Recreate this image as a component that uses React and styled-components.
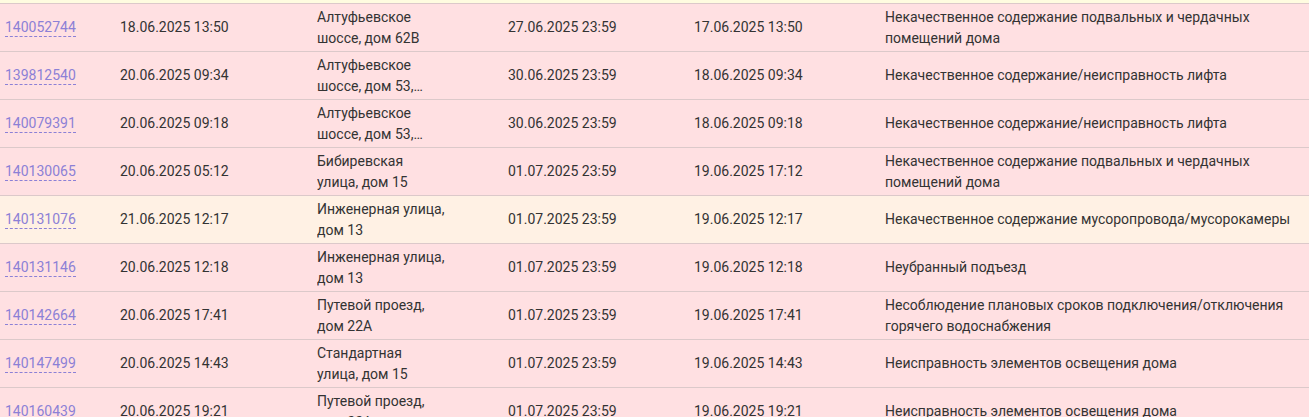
import React from 'react';
import styled, { createGlobalStyle } from 'styled-components';

const rows = [
    { id: '140052744', created: '18.06.2025 13:50', address: 'Алтуфьевское шоссе, дом 62В', deadline: '27.06.2025 23:59', updated: '17.06.2025 13:50', text: 'Некачественное содержание подвальных и чердачных помещений дома' },
    { id: '139812540', created: '20.06.2025 09:34', address: 'Алтуфьевское шоссе, дом 53, строение 1', deadline: '30.06.2025 23:59', updated: '18.06.2025 09:34', text: 'Некачественное содержание/неисправность лифта' },
    { id: '140079391', created: '20.06.2025 09:18', address: 'Алтуфьевское шоссе, дом 53, строение 1', deadline: '30.06.2025 23:59', updated: '18.06.2025 09:18', text: 'Некачественное содержание/неисправность лифта' },
    { id: '140130065', created: '20.06.2025 05:12', address: 'Бибиревская улица, дом 15', deadline: '01.07.2025 23:59', updated: '19.06.2025 17:12', text: 'Некачественное содержание подвальных и чердачных помещений дома' },
    { id: '140131076', created: '21.06.2025 12:17', address: 'Инженерная улица, дом 13', deadline: '01.07.2025 23:59', updated: '19.06.2025 12:17', text: 'Некачественное содержание мусоропровода/мусорокамеры', warn: true },
    { id: '140131146', created: '20.06.2025 12:18', address: 'Инженерная улица, дом 13', deadline: '01.07.2025 23:59', updated: '19.06.2025 12:18', text: 'Неубранный подъезд' },
    { id: '140142664', created: '20.06.2025 17:41', address: 'Путевой проезд, дом 22А', deadline: '01.07.2025 23:59', updated: '19.06.2025 17:41', text: 'Несоблюдение плановых сроков подключения/отключения горячего водоснабжения' },
    { id: '140147499', created: '20.06.2025 14:43', address: 'Стандартная улица, дом 15', deadline: '01.07.2025 23:59', updated: '19.06.2025 14:43', text: 'Неисправность элементов освещения дома' },
    { id: '140160439', created: '20.06.2025 19:21', address: 'Путевой проезд, дом 22А', deadline: '01.07.2025 23:59', updated: '19.06.2025 19:21', text: 'Неисправность элементов освещения дома' },
];

function App() {
    return(
        <>
            <Global/>
            <Table>
                <PrevTail/>
                {rows.map(r => (
                    <Row key={r.id} $warn={r.warn}>
                        <Cell><IdLink href="#">{r.id}</IdLink></Cell>
                        <Cell>{r.created}</Cell>
                        <Cell><Address>{r.address}</Address></Cell>
                        <Cell>{r.deadline}</Cell>
                        <Cell>{r.updated}</Cell>
                        <Cell>{r.text}</Cell>
                    </Row>
                ))}
            </Table>
        </>
    )
}
export default App;

const Global = createGlobalStyle`
    html, body { margin:0; padding:0; background:#ffe0e2; overflow:hidden; }
    body { font-family: Roboto, "Liberation Sans", sans-serif; }
`
const Table = styled.div`
    display:flex; flex-direction:column;
    width:1309px; height:417px; overflow:hidden;
    font-size:14px; line-height:21px; color:#333;
`
const PrevTail = styled.div`
    height:3px; flex:none;
    background:#fffce0;
`
const Row = styled.div`
    display:grid; flex:none;
    grid-template-columns: 115px 197px 191px 186px 191px 1fr;
    height:47px;
    border-top:1px solid #dcc9ca;
    background:${p => p.$warn ? '#fff1e4' : '#ffe0e2'};
`
const Cell = styled.div`
    display:flex; align-items:center;
    padding:0 5px;
    min-width:0;
`
const IdLink = styled.a`
    color:#8c80d6;
    text-decoration:none;
    border-bottom:1px dashed #8c80d6;
    line-height:17px;
`
const Address = styled.div`
    width:128.5px;
    display:-webkit-box;
    -webkit-line-clamp:2;
    -webkit-box-orient:vertical;
    overflow:hidden;
`
